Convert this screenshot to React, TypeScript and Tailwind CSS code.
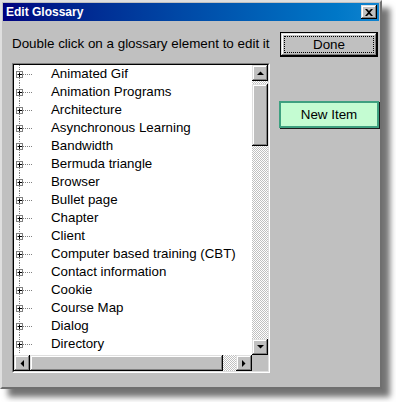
import React from 'react';

const ITEMS = [
  "Animated Gif",
  "Animation Programs",
  "Architecture",
  "Asynchronous Learning",
  "Bandwidth",
  "Bermuda triangle",
  "Browser",
  "Bullet page",
  "Chapter",
  "Client",
  "Computer based training (CBT)",
  "Contact information",
  "Cookie",
  "Course Map",
  "Dialog",
  "Directory",
];

// classic raised 3d bevel
const RAISED = "bg-[#c0c0c0] shadow-[inset_-1px_-1px_#000,inset_1px_1px_#dfdfdf,inset_-2px_-2px_#808080,inset_2px_2px_#fff]";
const CHECKER = "bg-[repeating-conic-gradient(#c0c0c0_0_25%,#ffffff_0_50%)] bg-[length:2px_2px]";

function Arrow({ dir }: { dir: "up" | "down" | "left" | "right" }) {
  const pts = {
    up: "0,4 7,4 3.5,0.5",
    down: "0,0 7,0 3.5,3.5",
    left: "4,0 4,7 0.5,3.5",
    right: "0,0 0,7 3.5,3.5",
  }[dir];
  const vertical = dir === "up" || dir === "down";
  return (
    <svg width={vertical ? 7 : 4} height={vertical ? 4 : 7} viewBox={vertical ? "0 0 7 4" : "0 0 4 7"}>
      <polygon points={pts} fill="#000" />
    </svg>
  );
}

function TreeGlyph() {
  return (
    <svg width="20" height="18" className="shrink-0">
      <line x1="5.5" y1="0" x2="5.5" y2="6" stroke="#808080" strokeDasharray="1 1" />
      <line x1="5.5" y1="13" x2="5.5" y2="18" stroke="#808080" strokeDasharray="1 1" />
      <line x1="9" y1="9.5" x2="18" y2="9.5" stroke="#808080" strokeDasharray="1 1" />
      <rect x="2.5" y="6.5" width="6" height="6" fill="#fff" stroke="#808080" />
      <line x1="3.5" y1="9.5" x2="8" y2="9.5" stroke="#000" />
      <line x1="5.5" y1="7.5" x2="5.5" y2="12" stroke="#000" />
    </svg>
  );
}

export default function App() {
  return (
    <div className="w-[396px] h-[402px] bg-white overflow-hidden" style={{ fontFamily: '"Liberation Sans", Arial, sans-serif' }}>
      <div className="w-[382px] h-[389px] bg-[#c0c0c0] border-2 border-t-[#dfdfdf] border-l-[#dfdfdf] border-r-[#6f6f6f] border-b-[#6f6f6f] shadow-[8px_8px_6px_rgba(0,0,0,0.55)] flex flex-col">
        {/* title bar */}
        <div className="mx-[1px] mt-[1px] h-[18px] bg-linear-to-r from-[#000080] to-[#1084d0] flex items-center justify-between pl-[3px] pr-[2px]">
          <span className="text-white font-bold text-[12px] leading-none">Edit Glossary</span>
          <div className={`w-[16px] h-[14px] flex items-center justify-center ${RAISED}`}>
            <svg width="8" height="7" viewBox="0 0 8 7">
              <path d="M0 0h2l2 2 2-2h2L5 3.5 8 7H6L4 5 2 7H0l3-3.5z" fill="#000" />
            </svg>
          </div>
        </div>

        <div className="flex mt-[11px] ml-[10px]">
          {/* left column */}
          <div className="flex flex-col">
            <div className="text-[13.4px] leading-[16px] text-black pt-[4px] whitespace-nowrap">Double click on a glossary element to edit it</div>
            <div className="mt-[11px] w-[258px] h-[310px] border border-t-[#808080] border-l-[#808080] border-r-white border-b-white">
              <div className="w-full h-full border border-t-black border-l-black border-r-[#dfdfdf] border-b-[#dfdfdf] grid grid-cols-[238px_16px] grid-rows-[290px_16px]">
                <div className="bg-white overflow-hidden">
                  {ITEMS.map((item) => (
                    <div key={item} className="h-[18px] flex items-center">
                      <TreeGlyph />
                      <span className="ml-[17px] text-[13.3px] text-black whitespace-nowrap leading-none">{item}</span>
                    </div>
                  ))}
                </div>
                {/* vertical scrollbar */}
                <div className={`flex flex-col ${CHECKER}`}>
                  <div className={`h-[16px] flex items-center justify-center ${RAISED}`}><Arrow dir="up" /></div>
                  <div className={`h-[62px] mt-[3px] ${RAISED}`} />
                  <div className="flex-1" />
                  <div className={`h-[16px] flex items-center justify-center ${RAISED}`}><Arrow dir="down" /></div>
                </div>
                {/* horizontal scrollbar */}
                <div className={`flex ${CHECKER}`}>
                  <div className={`w-[16px] flex items-center justify-center ${RAISED}`}><Arrow dir="left" /></div>
                  <div className={`w-[193px] ${RAISED}`} />
                  <div className="flex-1" />
                  <div className={`w-[16px] flex items-center justify-center ${RAISED}`}><Arrow dir="right" /></div>
                </div>
                <div className="bg-[#c0c0c0]" />
              </div>
            </div>
          </div>

          {/* right column */}
          <div className="flex flex-col ml-[9px]">
            <div className="ml-[1px] w-[98px] h-[25px] border border-black">
              <div className={`w-full h-full p-[3px] ${RAISED}`}>
                <div className="w-full h-full border border-dotted border-black flex items-center justify-center text-[13.4px] text-black leading-none">
                  Done
                </div>
              </div>
            </div>
            <div className="mt-[44px] w-[100px] h-[27px] bg-[#c4fcd2] border-2 border-[#3fa080] shadow-[1px_1px_0_#1a1a1a] flex items-center justify-center text-[13.4px] text-black leading-none">
              New Item
            </div>
          </div>
        </div>
      </div>
    </div>
  );
}
